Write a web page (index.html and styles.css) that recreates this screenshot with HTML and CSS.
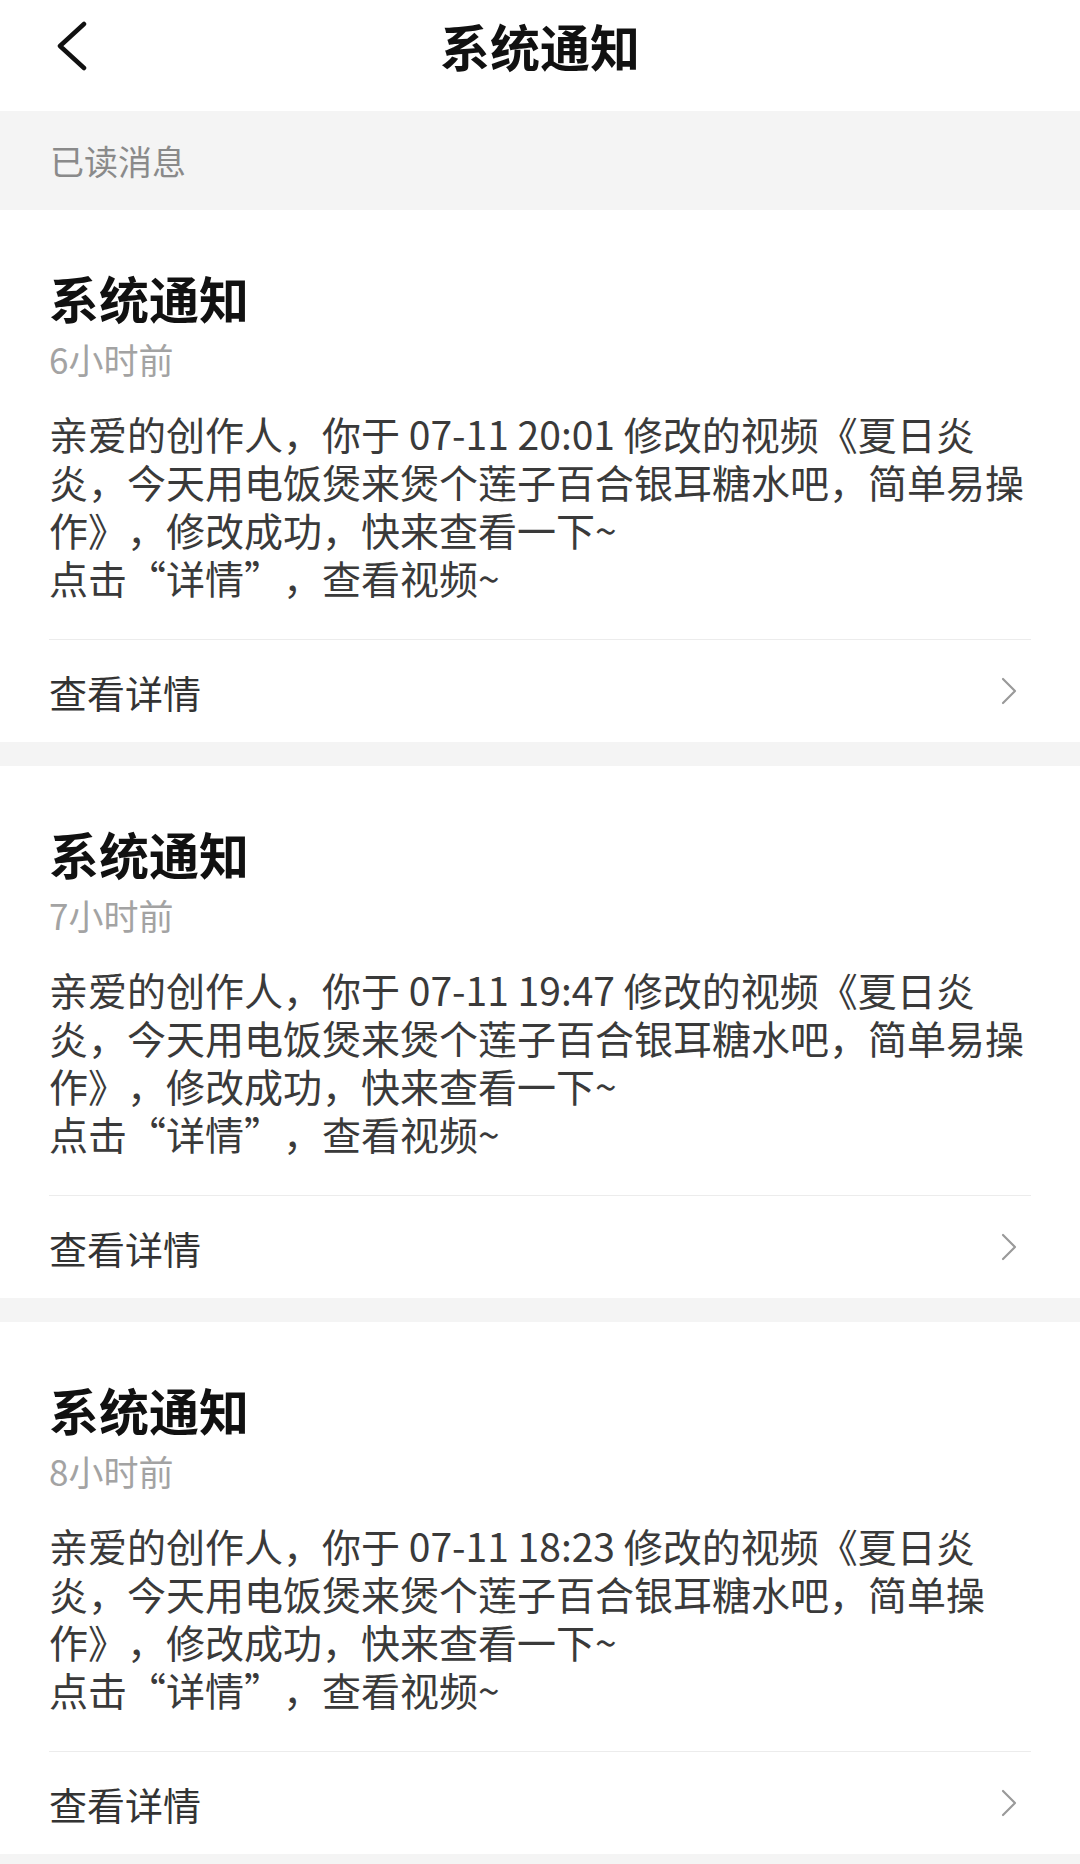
FILE: index.html
```html
<!DOCTYPE html>
<html lang="zh-CN">
<head>
<meta charset="utf-8">
<title>系统通知</title>
<link rel="stylesheet" href="styles.css">
</head>
<body>
<div class="page">
  <header class="topbar">
    <span class="back" aria-label="返回">
      <svg width="34" height="50" viewBox="0 0 34 50"><polyline points="30,3 6,25 30,47" fill="none" stroke="#111" stroke-width="4.5" stroke-linecap="round" stroke-linejoin="round"/></svg>
    </span>
    <h1 class="topbar-title">系统通知</h1>
  </header>

  <div class="section-label">已读消息</div>

  <div class="list">
    <article class="card">
      <h2 class="card-title">系统通知</h2>
      <div class="card-time">6小时前</div>
      <p class="card-body">亲爱的创作人，你于 07-11 20:01 修改的视频《夏日炎炎，今天用电饭煲来煲个莲子百合银耳糖水吧，简单易操作》，修改成功，快来查看一下~<br>点击“详情”，查看视频~</p>
      <div class="card-foot">
        <span class="foot-text">查看详情</span>
        <svg class="chev" width="16" height="28" viewBox="0 0 16 28"><polyline points="2,2 14,14 2,26" fill="none" stroke="#9a9a9a" stroke-width="2.2" stroke-linecap="round" stroke-linejoin="round"/></svg>
      </div>
    </article>

    <article class="card">
      <h2 class="card-title">系统通知</h2>
      <div class="card-time">7小时前</div>
      <p class="card-body">亲爱的创作人，你于 07-11 19:47 修改的视频《夏日炎炎，今天用电饭煲来煲个莲子百合银耳糖水吧，简单易操作》，修改成功，快来查看一下~<br>点击“详情”，查看视频~</p>
      <div class="card-foot">
        <span class="foot-text">查看详情</span>
        <svg class="chev" width="16" height="28" viewBox="0 0 16 28"><polyline points="2,2 14,14 2,26" fill="none" stroke="#9a9a9a" stroke-width="2.2" stroke-linecap="round" stroke-linejoin="round"/></svg>
      </div>
    </article>

    <article class="card">
      <h2 class="card-title">系统通知</h2>
      <div class="card-time">8小时前</div>
      <p class="card-body">亲爱的创作人，你于 07-11 18:23 修改的视频《夏日炎炎，今天用电饭煲来煲个莲子百合银耳糖水吧，简单操作》，修改成功，快来查看一下~<br>点击“详情”，查看视频~</p>
      <div class="card-foot">
        <span class="foot-text">查看详情</span>
        <svg class="chev" width="16" height="28" viewBox="0 0 16 28"><polyline points="2,2 14,14 2,26" fill="none" stroke="#9a9a9a" stroke-width="2.2" stroke-linecap="round" stroke-linejoin="round"/></svg>
      </div>
    </article>
  </div>
</div>
</body>
</html>
```
FILE: styles.css
```css
* { box-sizing: border-box; }
html, body {
  margin: 0;
  padding: 0;
  background: #f4f4f4;
}
body {
  font-family: "Noto Sans CJK SC", "Noto Sans", sans-serif;
  color: #333;
  text-spacing-trim: space-all;
}
.page {
  width: 1080px;
  min-height: 1864px;
  background: #f4f4f4;
}
.topbar {
  position: relative;
  height: 111px;
  background: #fff;
  display: flex;
  align-items: flex-start;
  justify-content: center;
  padding-top: 16px;
}
.back {
  position: absolute;
  left: 54px;
  top: 21px;
  display: block;
  line-height: 0;
}
.topbar-title {
  margin: 0;
  font-size: 50px;
  line-height: 58px;
  font-weight: 700;
  color: #111;
}
.section-label {
  height: 99px;
  display: flex;
  align-items: center;
  padding: 0 50px;
  font-size: 34px;
  color: #8a8a8a;
}
.list {
  display: flex;
  flex-direction: column;
  gap: 24px;
}
.card {
  background: #fff;
  padding: 57px 49px 0;
}
.card-title {
  margin: 0;
  font-size: 50px;
  line-height: 60px;
  font-weight: 700;
  color: #111;
}
.card-time {
  margin-top: 10px;
  font-size: 35px;
  line-height: 44px;
  color: #a3a3a3;
}
.card-body {
  margin: 28px 0 0;
  font-size: 39px;
  line-height: 48px;
  color: #3a3a3a;
  padding-bottom: 38px;
  border-bottom: 1.5px solid #ececec;
}
.card-foot {
  height: 102px;
  display: flex;
  align-items: center;
  justify-content: space-between;
  padding-right: 14px;
}
.foot-text {
  font-size: 38px;
  color: #333;
}
.chev { display: block; }
```
